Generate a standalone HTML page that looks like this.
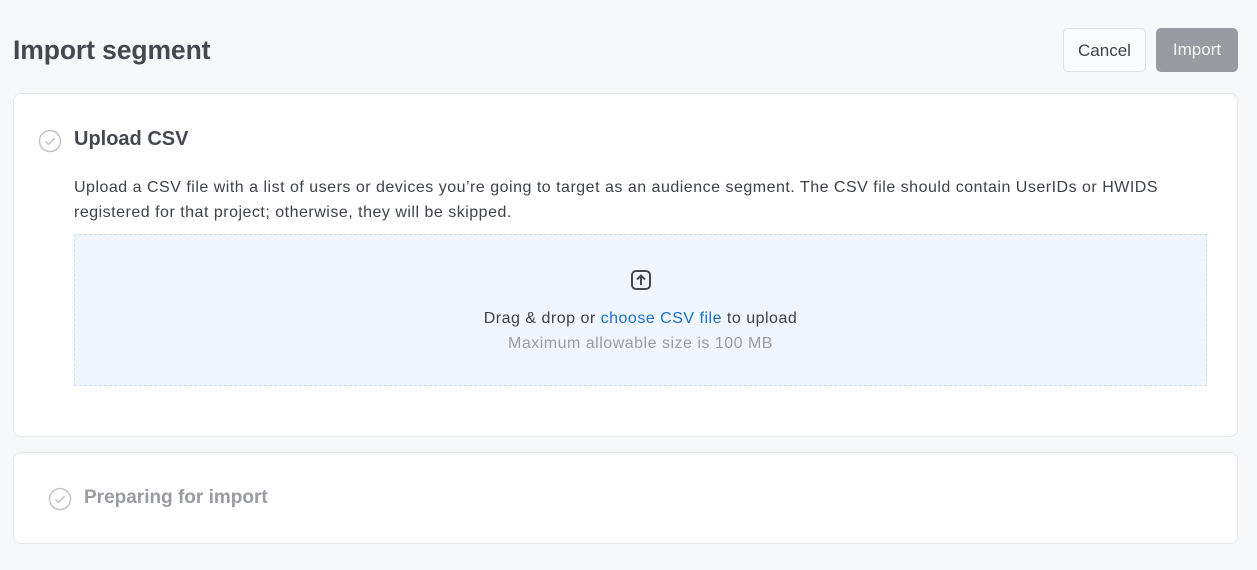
<!DOCTYPE html>
<html><head><style>
body{margin:0;width:1257px;height:570px;background:#f7f8fa;font-family:"Liberation Sans",Arial,sans-serif;color:#3f4249;position:relative;overflow:hidden}
.a{position:absolute}
h1{position:absolute;left:13px;top:35px;margin:0;font-size:26.5px;font-weight:bold;color:#45484f;letter-spacing:-0.1px}
.btn{position:absolute;top:28px;height:44px;border-radius:5px;font-size:17px;line-height:44px;text-align:center;box-sizing:border-box}
.card{position:absolute;left:13px;width:1225px;background:#fff;border:1px solid #e7e8ec;border-radius:8px;box-sizing:border-box}
</style></head><body>
<h1>Import segment</h1>
<div class="btn" style="left:1063px;width:83px;background:#fafbfc;border:1px solid #dfe1e5;color:#3f4249">Cancel</div>
<div class="btn" style="left:1156px;width:82px;background:#989ba1;color:#f3f4f6">Import</div>
<div class="card" style="top:93px;height:344px">
<svg class="a" style="left:24px;top:35px" width="24" height="24" viewBox="0 0 24 24"><circle cx="12" cy="12" r="10.5" fill="none" stroke="#c3c5ca" stroke-width="1.5"/><path d="M7.5 12.3l3 3 6-6" fill="none" stroke="#c3c5ca" stroke-width="1.5"/></svg>
<div class="a" style="left:60px;top:34px;font-size:20px;font-weight:bold;color:#45484f">Upload CSV</div>
<div class="a" style="left:60px;top:81px;width:1115px;font-size:16px;line-height:25px;color:#3f4249;letter-spacing:0.5px">Upload a CSV file with a list of users or devices you’re going to target as an audience segment. The CSV file should contain UserIDs or HWIDS registered for that project; otherwise, they will be skipped.</div>
<div class="a" style="left:60px;top:140px;width:1133px;height:152px;background:#eff6ff;border:1px dashed #d6d9e6;box-sizing:border-box">
<svg class="a" style="left:555px;top:34px" width="22" height="22" viewBox="0 0 22 22"><rect x="2" y="2" width="18" height="18" rx="4" fill="none" stroke="#45484f" stroke-width="2"/><path d="M11 16V7M7 10.5l4-4 4 4" fill="none" stroke="#45484f" stroke-width="2"/></svg>
<div class="a" style="left:0;width:100%;top:75px;text-align:center;font-size:16px;color:#3f4249;letter-spacing:0.5px">Drag &amp; drop or <span style="color:#1a73c8">choose CSV file</span> to upload</div>
<div class="a" style="left:0;width:100%;top:100px;text-align:center;font-size:16px;color:#9a9ca2;letter-spacing:0.5px">Maximum allowable size is 100 MB</div>
</div>
</div>
<div class="card" style="top:452px;height:92px">
<svg class="a" style="left:34px;top:34px" width="24" height="24" viewBox="0 0 24 24"><circle cx="12" cy="12" r="10.5" fill="none" stroke="#c3c5ca" stroke-width="1.5"/><path d="M7.5 12.3l3 3 6-6" fill="none" stroke="#c3c5ca" stroke-width="1.5"/></svg>
<div class="a" style="left:70px;top:34px;font-size:19px;font-weight:bold;color:#9a9ca2">Preparing for import</div>
</div>
</body></html>
